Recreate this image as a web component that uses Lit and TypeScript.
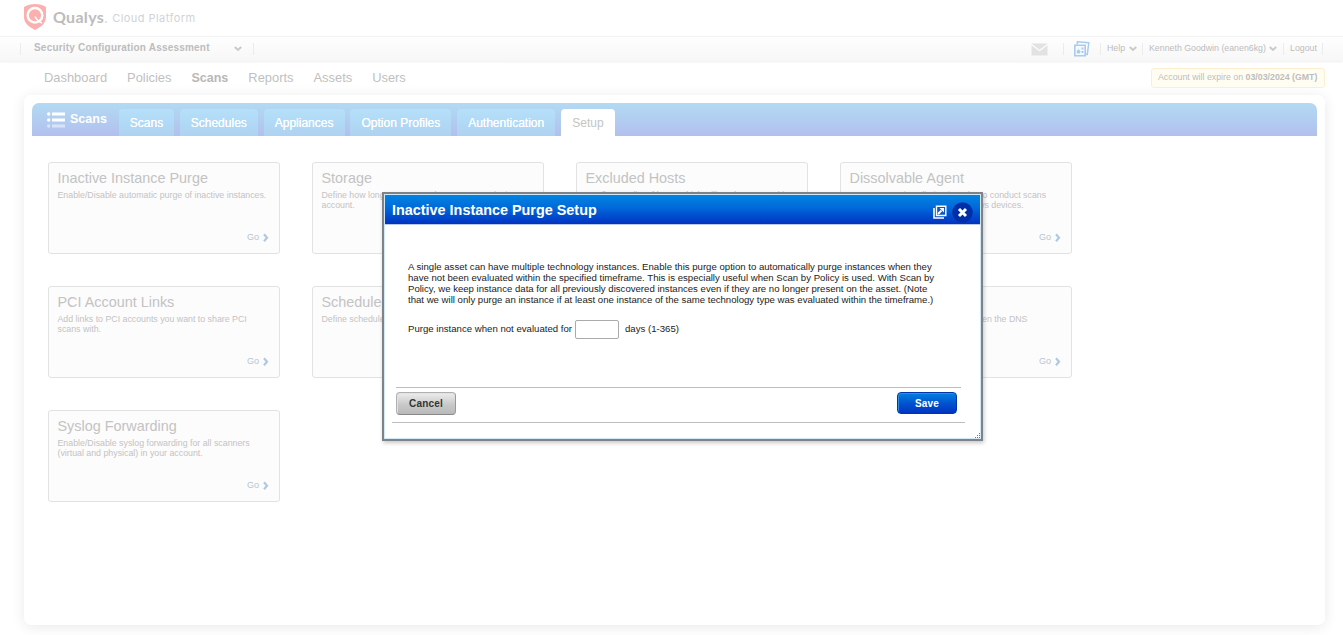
import { LitElement, html, css } from "lit";
import { classMap } from "lit/directives/class-map.js";

type Card = { title: string; lines: string[] };

const CARDS: Card[] = [
  { title: "Inactive Instance Purge", lines: ["Enable/Disable automatic purge of inactive instances."] },
  { title: "Storage", lines: ["Define how long you want to keep scan results in", "account."] },
  { title: "Excluded Hosts", lines: ["Configure a list of hosts which will not be scanned by"] },
  { title: "Dissolvable Agent", lines: ["Accept Agent installation in order to conduct scans", "which require an agent on Windows devices."] },
  { title: "PCI Account Links", lines: ["Add links to PCI accounts you want to share PCI", "scans with."] },
  { title: "Scheduled Scans", lines: ["Define scheduled scan options."] },
  { title: "", lines: [] },
  { title: "", lines: ["Choose how hosts are tracked when the DNS"] },
  { title: "Syslog Forwarding", lines: ["Enable/Disable syslog forwarding for all scanners", "(virtual and physical) in your account."] },
];

const NAV = ["Dashboard", "Policies", "Scans", "Reports", "Assets", "Users"];
const TABS: [string, number][] = [
  ["Scans", 55], ["Schedules", 78], ["Appliances", 81], ["Option Profiles", 101], ["Authentication", 98], ["Setup", 54],
];

class SetupCard extends LitElement {
  static properties = { card: { attribute: false } };
  declare card: Card;
  static styles = css`
    :host { display: flex; flex-direction: column; box-sizing: border-box; height: 92px; padding: 7px 10px 9px 8.5px; border: 1px solid #e2e2e2; border-radius: 3px; background: #fcfcfc; color: #c3c3c3; }
    .title { min-height: 17px; font-size: 14.4px; line-height: 17px; white-space: nowrap; }
    .desc { margin-top: 3px; font-size: 8.8px; line-height: 10px; white-space: nowrap; }
    .go { display: flex; align-items: center; justify-content: flex-end; gap: 4px; margin-top: auto; font-size: 9px; line-height: 14px; color: #b4c5d5; }
  `;
  render() {
    return html`<div class="title">${this.card.title}</div>
      <div class="desc">${this.card.lines.map((l) => html`<div>${l}</div>`)}</div>
      <div class="go"><span>Go</span><svg width="6" height="9" viewBox="0 0 6 9"><path d="M1 1.300 4 4.800 1 8.200" fill="none" stroke="#b0c9e2" stroke-width="2.200" /></svg></div>`;
  }
}
customElements.define("setup-card", SetupCard);

const chevron = html`<svg width="8" height="6" viewBox="0 0 8 6"><path d="M.8 1 4 4 7.200 1" fill="none" stroke="#cacaca" stroke-width="2" /></svg>`;

class AppRoot extends LitElement {
  static styles = css`
    :host { display: block; position: relative; width: 1343px; height: 635px; overflow: hidden; background: #fff; font-family: "Liberation Sans", Arial, sans-serif; color: #bdbdbd; }
    * { box-sizing: border-box; }
    svg { display: block; flex: none; }
    .brand { display: flex; align-items: flex-start; height: 36px; padding: 3px 0 0 23px; }
    .name { margin: 4px 0 0 6px; font: 700 16px/20px Lato, sans-serif; color: #bcbcbc; letter-spacing: .3px; }
    .dot { color: #dcdcdc; font-weight: 400; }
    .platform { margin: 7px 0 0 4px; font: 400 11px/16px Inter, sans-serif; color: #d0d3d8; letter-spacing: .45px; }
    .bar { display: flex; align-items: center; justify-content: space-between; height: 25px; padding: 0 20px; border-top: 1px solid #f3f3f3; background: linear-gradient(#fefefe, #f7f7f7); box-shadow: 0 1px 2px #eee; }
    .module { display: flex; align-items: center; justify-content: space-between; width: 234px; height: 12px; padding: 0 11px 0 13px; border: solid #ececec; border-width: 0 1px; font-size: 10px; letter-spacing: .2px; font-weight: 700; line-height: 12px; }
    .module span { margin-top: -2px; }
    .tools { display: flex; align-items: center; font-size: 8.8px; line-height: 12px; }
    .tools > div { display: flex; align-items: center; height: 12px; gap: 4px; border-right: 1px solid #ececec; }
    .tools span { margin-top: -2px; }
    .mail { width: 33px; }
    .news { width: 37px; padding-left: 9px; }
    .help { width: 42px; padding-left: 6px; }
    .user { width: 141px; padding-left: 6px; gap: 3px !important; }
    .out { width: 39px; padding-left: 6px; }
    .nav { display: flex; align-items: center; height: 34px; padding: 0 18px 0 44px; }
    .links { display: flex; gap: 20px; font-size: 12.900px; line-height: 16px; color: #bfbfbf; }
    .links .on { font-weight: 700; font-size: 12.500px; color: #b8b8b8; }
    .expire { margin-left: auto; width: 174px; height: 20px; margin-top: -1px; padding-left: 6px; border: 1px solid #fdeed0; border-radius: 3px; background: #fffdf2; font-size: 8.800px; line-height: 17px; white-space: nowrap; }
    .panel { width: 1301px; height: 530px; margin-left: 24px; padding: 8px; border-radius: 7px; background: #fff; box-shadow: 0 2px 14px rgba(0,0,0,.09); }
    .tabs { display: flex; align-items: flex-end; height: 33px; padding-left: 15px; border-radius: 7px 7px 0 0; background: linear-gradient(#b2daf3, #b2c0ee); color: #fff; }
    .lead { display: flex; width: 72px; height: 33px; gap: 5px; padding-top: 9px; font-size: 12.500px; font-weight: 700; line-height: 14px; }
    .tab { height: 27px; margin-right: 5.800px; border-radius: 4px 4px 0 0; background: linear-gradient(#b6dff9, #b0daf6 45%, #b0d2f1); text-align: center; font-size: 12px; line-height: 28px; white-space: nowrap; text-shadow: 0 0 .6px #fff; }
    .tab.on { background: #fff; color: #c4c4c4; text-shadow: none; }
    .cards { display: grid; grid-template-columns: repeat(4, 232px); gap: 32px; padding: 26px 16px; }
    .modal { position: absolute; left: 382px; top: 192px; width: 601px; height: 249px; border: 2px solid #7d8388; background: #fff; color: #222; box-shadow: 1px 2px 4px rgba(0,0,0,.22); }
    .frame { display: flex; flex-direction: column; height: 100%; border: 1px solid #d3e8f6; }
    .head { display: flex; align-items: center; flex: none; height: 30px; padding: 0 7px; border-bottom: 1px solid #b9cbe2; background: linear-gradient(#0085e2, #0068d9 45%, #0033c2); color: #fff; font-size: 14.400px; font-weight: 700; }
    .head span { flex: 1; line-height: 16px; padding-top: 1px; }
    .close { margin: 5px 0 0 5px; }
    .ext { margin-top: 4px; }
    .text { margin: 36px 0 0 23px; font-size: 9.610px; line-height: 11px; white-space: nowrap; }
    .row { display: flex; align-items: flex-start; height: 19px; margin: 15px 0 0 23px; font-size: 9.620px; line-height: 17px; white-space: nowrap; }
    .field { width: 44px; height: 19px; margin: 0 6.500px 0 2.500px; padding: 0; border: 1px solid #aaa; border-radius: 2px; background: #fff; }
    .foot { display: flex; justify-content: space-between; height: 35px; margin: 48px 19px 0 11px; padding-top: 4px; border-top: 1px solid #bdbdbd; }
    .end { height: 1px; margin: 0 15px 0 7px; background: #bdbdbd; }
    .btn { width: 60px; height: 23px; padding: 0; border: 1px solid #b0b0b0; border-bottom-color: #888; border-right-color: #999; border-radius: 4px; background: linear-gradient(#ededed, #c9c9c9 55%, #b9b9b9); box-shadow: inset 1px 1px #e2e2e2; color: #333; font: 700 10px/20px "Liberation Sans", sans-serif; letter-spacing: .2px; }
    .save { height: 22px; margin-right: 4px; padding-top: 1px; border-color: #0036a8; background: linear-gradient(#0080e0, #0055d0 50%, #0034c2); box-shadow: inset 1px 1px #2a8fe6; color: #fff; }
    .grip { position: absolute; right: 0; bottom: 0; }
  `;
  render() {
    return html`
      <div class="brand">
        <svg width="24" height="28" viewBox="0 0 24 28"><path d="M12 1C8 1 4 2 1 4v10c0 6 5 10 11 13 6-3 11-7 11-13V4C20 2 16 1 12 1z" fill="#fbb0b0" /><circle cx="12" cy="12.300" r="7.300" fill="none" stroke="#fff" stroke-width="2.400" /><path d="M12 13.500c1.500 3.200 3.500 5.200 7 6.500" fill="none" stroke="#fff" stroke-width="1.600" /></svg>
        <div class="name">Qualys<span class="dot">.</span></div><div class="platform">Cloud Platform</div>
      </div>
      <div class="bar">
        <div class="module"><span>Security Configuration Assessment</span>${chevron}</div>
        <div class="tools">
          <div class="mail"><svg width="17" height="13" viewBox="0 0 17 13"><path d="M.5.5h16v12H.5z" fill="#e2e2e2" /><path d="M0 1l8.500 6.500L17 1" fill="none" stroke="#fafafa" stroke-width="1.500" /></svg></div>
          <div class="news"><svg width="17" height="16" viewBox="0 0 17 16"><path d="M4 3.500 4.500.8 15.800 1.800 14.300 13.500l-1.500-.2" fill="none" stroke="#a9cbed" stroke-width="1.500" /><path d="M1.800 4.300h10.400v10.400H1.800z" fill="#f4f9fe" stroke="#a9cbed" stroke-width="1.600" /><path d="M3.500 10.500 5.500 8l2 2.500-.8 2H4.300zM8.500 6.500h2v2h-2zM8.500 10h2v2h-2z" fill="#a9cbed" /></svg></div>
          <div class="help"><span>Help</span>${chevron}</div>
          <div class="user"><span>Kenneth Goodwin (eanen6kg)</span>${chevron}</div>
          <div class="out"><span>Logout</span></div>
        </div>
      </div>
      <div class="nav">
        <div class="links">${NAV.map((n) => html`<span class=${classMap({ on: n === "Scans" })}>${n}</span>`)}</div>
        <div class="expire">Account will expire on <b>03/03/2024 (GMT)</b></div>
      </div>
      <div class="panel">
        <div class="tabs">
          <div class="lead"><svg width="18" height="17" viewBox="0 0 18 17"><path d="M5 .5h13v3H5zM5 6.500h13v3H5z" fill="#fff" /><circle cx="1.700" cy="2" r="1.700" fill="#fff" /><circle cx="1.700" cy="8" r="1.700" fill="#fff" /><g opacity=".5" fill="#fff"><circle cx="1.700" cy="14" r="1.700" /><path d="M5 12.500h13v3H5z" /></g></svg><span>Scans</span></div>
          ${TABS.map(([t, w]) => html`<div class=${classMap({ tab: true, on: t === "Setup" })} style="width:${w}px">${t}</div>`)}
        </div>
        <div class="cards">${CARDS.map((c) => html`<setup-card .card=${c}></setup-card>`)}</div>
      </div>
      <div class="modal"><div class="frame">
        <div class="head"><span>Inactive Instance Purge Setup</span>
          <svg class="ext" width="14" height="14" viewBox="0 0 14 14"><path d="M3.500 1.200h9.300v9.300H3.500z" fill="#0a58c8" stroke="#fff" stroke-width="1.400" /><path d="M1 3v10h10" fill="none" stroke="#fff" stroke-width="1.600" /><path d="M5 9 8.500 5.500" stroke="#fff" stroke-width="2" /><path d="M6.500 3H11v4.500z" fill="#fff" /></svg>
          <svg class="close" width="21" height="21" viewBox="0 0 21 21"><circle cx="10.500" cy="10.500" r="10.300" fill="#002ea8" /><path d="M7 7l7 7M14 7l-7 7" stroke="#fff" stroke-width="3" /></svg>
        </div>
        <div class="text">
          <div>A single asset can have multiple technology instances. Enable this purge option to automatically purge instances when they</div>
          <div>have not been evaluated within the specified timeframe. This is especially useful when Scan by Policy is used. With Scan by</div>
          <div>Policy, we keep instance data for all previously discovered instances even if they are no longer present on the asset. (Note</div>
          <div>that we will only purge an instance if at least one instance of the same technology type was evaluated within the timeframe.)</div>
        </div>
        <div class="row"><span>Purge instance when not evaluated for</span><input class="field" /><span>days (1-365)</span></div>
        <div class="foot"><button class="btn">Cancel</button><button class="btn save">Save</button></div>
        <div class="end"></div>
        <svg class="grip" width="6" height="6" viewBox="0 0 6 6"><path d="M4 0h1v1H4zM2 2h1v1H2zM4 2h1v1H4zM0 4h1v1H0zM2 4h1v1H2zM4 4h1v1H4z" fill="#777" /></svg>
      </div></div>`;
  }
}
customElements.define("app-root", AppRoot);
